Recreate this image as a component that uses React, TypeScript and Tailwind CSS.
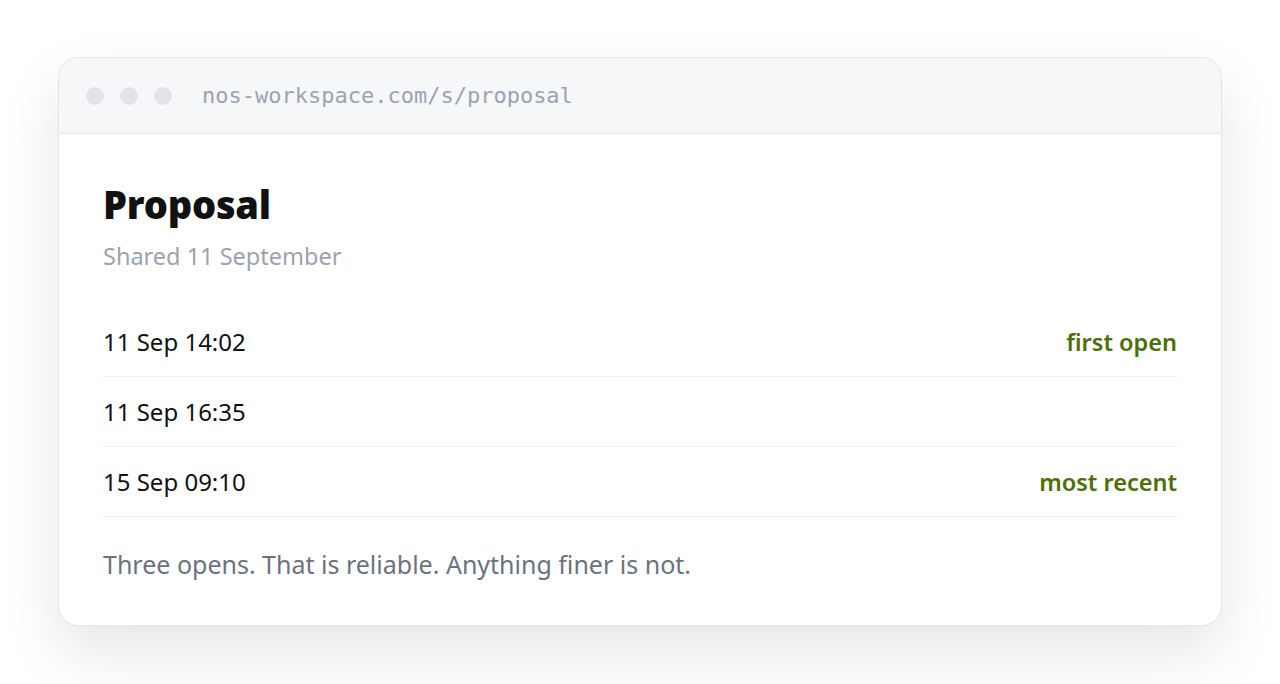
const rows = [
  { time: "11 Sep 14:02", tag: "first open" },
  { time: "11 Sep 16:35", tag: "" },
  { time: "15 Sep 09:10", tag: "most recent" },
];

export default function App() {
  return (
    <div className="min-h-screen bg-white px-[58px] pt-[57px] pb-10 font-['Noto_Sans',sans-serif]">
      <div className="overflow-hidden rounded-[20px] border border-[#e3e5e8] bg-white shadow-[0_26px_60px_rgba(0,0,0,0.1)]">
        <div className="flex h-[76px] items-center gap-4 border-b border-[#e5e7eb] bg-[#f6f7f9] px-[27px]">
          <div className="flex gap-4">
            <span className="h-[18px] w-[18px] rounded-full bg-[#e2e4e7]" />
            <span className="h-[18px] w-[18px] rounded-full bg-[#e2e4e7]" />
            <span className="h-[18px] w-[18px] rounded-full bg-[#e2e4e7]" />
          </div>
          <span className="ml-[14px] font-['DejaVu_Sans_Mono',monospace] text-[22px] text-[#9ca3af]">
            nos-workspace.com/s/proposal
          </span>
        </div>
        <div className="px-[44px] pt-[48px] pb-[45px]">
          <h1 className="text-[38px] leading-[44px] font-black tracking-[-0.2px] text-[#111111]">Proposal</h1>
          <p className="mt-[14px] text-[23.5px] leading-[32px] text-[#9ca3af]">Shared 11 September</p>
          <div className="mt-[35px]">
            {rows.map((r) => (
              <div
                key={r.time}
                className="flex h-[70px] items-center justify-between border-b border-[#eeeff1] text-[24px] leading-[32px]"
              >
                <span className="text-[#111111]">{r.time}</span>
                {r.tag && <span className="text-[23.5px] font-semibold text-[#4d6f05]">{r.tag}</span>}
              </div>
            ))}
          </div>
          <p className="mt-[31px] text-[25px] leading-[32px] text-[#6b7280]">
            Three opens. That is reliable. Anything finer is not.
          </p>
        </div>
      </div>
    </div>
  );
}
